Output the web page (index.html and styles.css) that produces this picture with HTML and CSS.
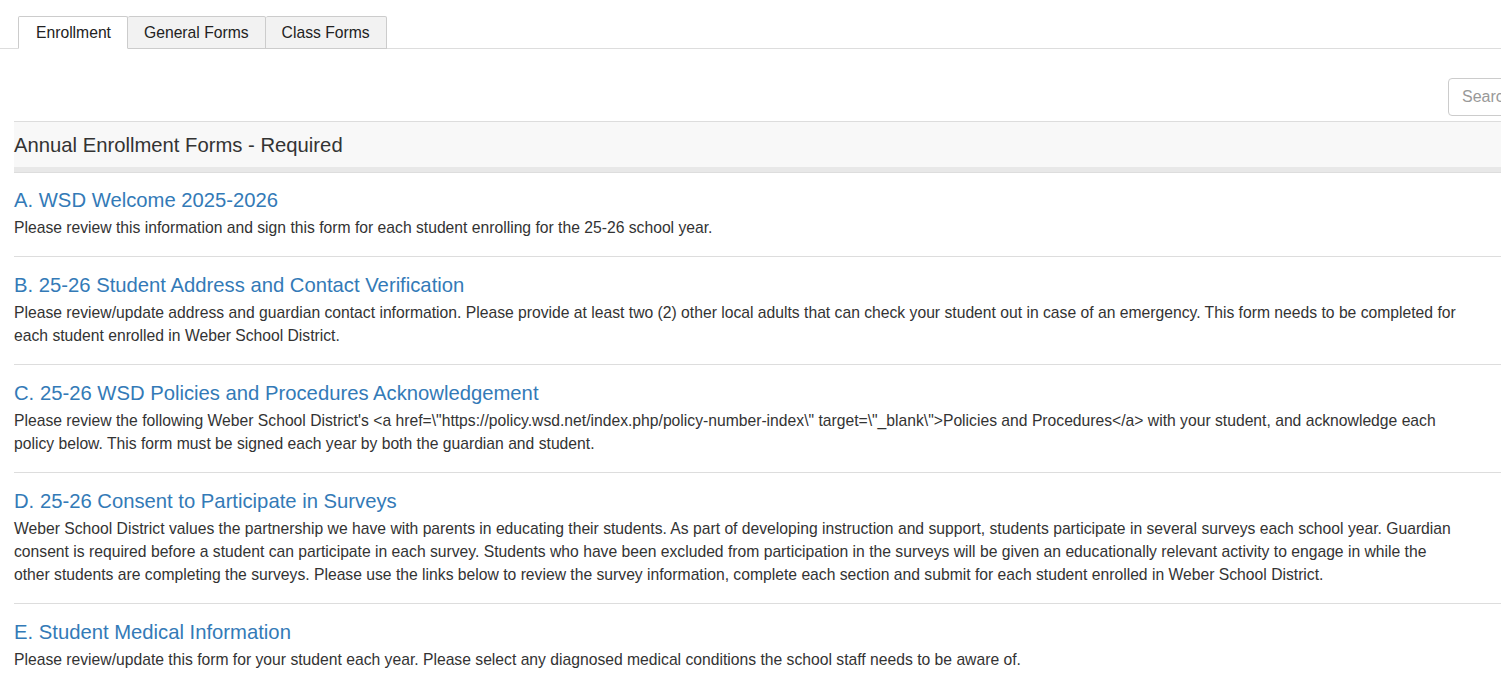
FILE: index.html
```html
<!DOCTYPE html>
<html>
	<head>
		<meta charset="UTF-8">
		<title>Enrollment Forms</title>
		<link rel="stylesheet" href="styles.css">
	</head>
	<body>
		<ul class="tabs">
			<li class="active"><a href="javascript:;">Enrollment</a></li>
			<li><a href="javascript:;">General Forms</a></li>
			<li><a href="javascript:;">Class Forms</a></li>
		</ul>
		<div class="content">
			<div class="search-row">
				<input type="text" class="search" placeholder="Search">
			</div>
			<div class="section-head">Annual Enrollment Forms - Required</div>
			<div class="forms">
				<div class="form-item">
					<a href="javascript:;" class="form-title">A. WSD Welcome 2025-2026</a>
					<p>Please review this information and sign this form for each student enrolling for the 25-26 school year.</p>
				</div>
				<div class="form-item">
					<a href="javascript:;" class="form-title">B. 25-26 Student Address and Contact Verification</a>
					<p>Please review/update address and guardian contact information. Please provide at least two (2) other local adults that can check your student out in case of an emergency. This form needs to be completed for each student enrolled in Weber School District.</p>
				</div>
				<div class="form-item">
					<a href="javascript:;" class="form-title">C. 25-26 WSD Policies and Procedures Acknowledgement</a>
					<p>Please review the following Weber School District's &lt;a href=\"https://policy.wsd.net/index.php/policy-number-index\" target=\"_blank\"&gt;Policies and Procedures&lt;/a&gt; with your student, and acknowledge each policy below. This form must be signed each year by both the guardian and student.</p>
				</div>
				<div class="form-item">
					<a href="javascript:;" class="form-title">D. 25-26 Consent to Participate in Surveys</a>
					<p>Weber School District values the partnership we have with parents in educating their students. As part of developing instruction and support, students participate in several surveys each school year. Guardian consent is required before a student can participate in each survey. Students who have been excluded from participation in the surveys will be given an educationally relevant activity to engage in while the other students are completing the surveys. Please use the links below to review the survey information, complete each section and submit for each student enrolled in Weber School District.</p>
				</div>
				<div class="form-item">
					<a href="javascript:;" class="form-title">E. Student Medical Information</a>
					<p>Please review/update this form for your student each year. Please select any diagnosed medical conditions the school staff needs to be aware of.</p>
				</div>
			</div>
		</div>
	</body>
</html>
```

FILE: styles.css
```css
*{
	margin:0;
	padding:0;
	box-sizing:border-box;
}
html,body{
	overflow:hidden;
}
body{
	font-family:"Liberation Sans",Arial,sans-serif;
	font-size:15.7px;
	line-height:23px;
	color:#333;
	background:#fff;
}
a{
	text-decoration:none;
}

/* tabs */
.tabs{
	list-style:none;
	display:flex;
	margin-top:16px;
	padding-left:18px;
	border-bottom:1px solid #ddd;
}
.tabs li{
	margin-bottom:-1px;
}
.tabs a{
	display:block;
	height:33px;
	padding:4px 16px 0;
	color:#222;
	background:#f2f2f2;
	border:1px solid #ccc;
	border-left:none;
	border-radius:2px 2px 0 0;
}
.tabs li:first-child a{
	border-left:1px solid #ccc;
}
.tabs .active a{
	background:#fff;
	border-bottom-color:#fff;
	padding:4px 16px 0 17px;
}

/* content */
.content{
	width:1648px;
	padding-left:14px;
}
.search-row{
	display:flex;
	justify-content:flex-end;
	padding-top:29px;
	margin-bottom:5px;
}
.search{
	width:200px;
	height:38px;
	padding:6px 13px;
	font-family:"Liberation Sans",Arial,sans-serif;
	font-size:16px;
	color:#555;
	border:1px solid #ccc;
	border-radius:4px;
	outline:none;
}
.search::placeholder{
	color:#999;
}
.section-head{
	font-size:20.25px;
	line-height:24px;
	padding:11px 0 10px;
	background:#f8f8f8;
	border-top:1px solid #ddd;
	border-bottom:5px solid #e8e8e8;
	box-shadow:0 1px 0 #ddd;
	color:#333;
}
.form-item{
	padding:16px 0 17px;
	border-bottom:1px solid #ddd;
}
.form-item:last-child{
	border-bottom:none;
}
.form-title{
	display:block;
	font-size:20.25px;
	line-height:24px;
	color:#337ab7;
}
.form-item p{
	max-width:1448px;
	margin-top:4px;
}
```
